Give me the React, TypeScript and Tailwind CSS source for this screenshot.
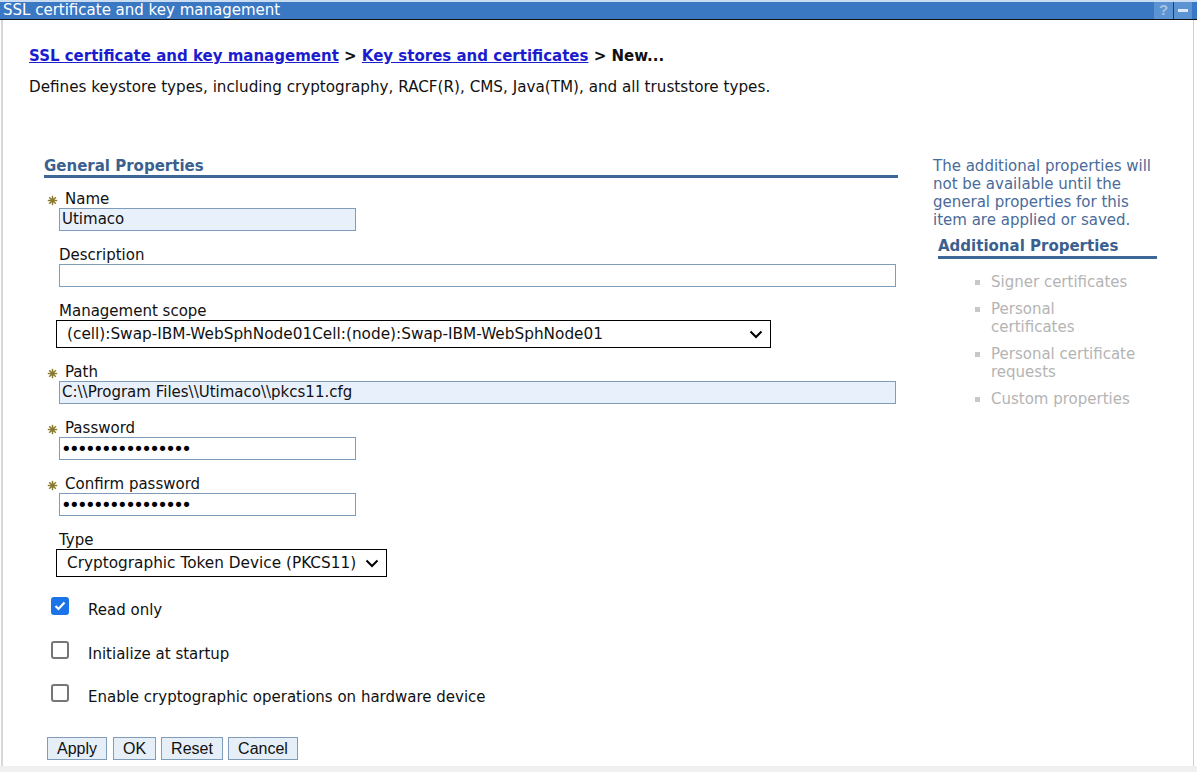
import React from "react";

const verdana = { fontFamily: '"DejaVu Sans", Verdana, sans-serif' };
const arial = { fontFamily: '"Liberation Sans", Arial, sans-serif' };

function Star() {
  // small olive "required" marker
  const rays = [0, 45, 90, 135];
  return (
    <svg width="11" height="11" viewBox="0 0 11 11" className="shrink-0">
      {rays.map((r) => (
        <line key={r} x1="5.5" y1="0.8" x2="5.5" y2="10.2" stroke="#8a7a2e" strokeWidth="1.4" transform={`rotate(${r} 5.5 5.5)`} />
      ))}
      <circle cx="5.5" cy="5.5" r="2.2" fill="#8a7a2e" />
    </svg>
  );
}

function Label({ text, required }: { text: string; required?: boolean }) {
  return (
    <div className="h-[18px] flex items-center text-[15px] leading-[18px] text-[#111]">
      {required ? (
        <>
          <span className="ml-[3px] mt-[2px]"><Star /></span>
          <span className="ml-[7px]">{text}</span>
        </>
      ) : (
        <span className="ml-[15px]">{text}</span>
      )}
    </div>
  );
}

function TextBox({ value, w, filled }: { value: string; w: string; filled?: boolean }) {
  return (
    <div
      className={`ml-[15px] h-[23px] border border-[#7f9db9] ${filled ? "bg-[#e8f0fc]" : "bg-white"} ${w} px-[2px] text-[15px] leading-[21px] text-[#111] whitespace-nowrap overflow-hidden`}
    >
      {value}
    </div>
  );
}

function Dots() {
  return (
    <div className="ml-[15px] h-[23px] w-[297px] border border-[#7f9db9] bg-white pl-[1px] flex items-center text-[18px] leading-[21px] tracking-[-2.6px] text-black whitespace-nowrap overflow-hidden">
      ••••••••••••••••
    </div>
  );
}

function Chevron() {
  return (
    <svg width="14" height="9" viewBox="0 0 14 9" className="shrink-0">
      <path d="M1.5 1.5 L7 7 L12.5 1.5" fill="none" stroke="#000" strokeWidth="2" />
    </svg>
  );
}

function Select({ value, w }: { value: string; w: string }) {
  return (
    <div className={`ml-[12px] h-[28px] border border-black bg-white ${w} flex items-center justify-between pl-[10px] pr-[7px] text-[15.3px] text-[#111]`}>
      <span className="whitespace-nowrap">{value}</span>
      <Chevron />
    </div>
  );
}

function Check({ checked, text }: { checked?: boolean; text: string }) {
  return (
    <div className="flex items-start h-[18px]">
      {checked ? (
        <span className="ml-[7px] w-[18px] h-[18px] shrink-0 rounded-[3px] bg-[#1a73e8] flex items-center justify-center">
          <svg width="12" height="10" viewBox="0 0 12 10">
            <path d="M1.5 5 L4.5 8 L10.5 1.5" fill="none" stroke="#fff" strokeWidth="2.2" />
          </svg>
        </span>
      ) : (
        <span className="ml-[7px] w-[18px] h-[18px] shrink-0 rounded-[3px] border-2 border-[#767676] bg-white" />
      )}
      <span className="ml-[19px] mt-[4px] text-[15px] leading-[18px] text-[#111] whitespace-nowrap">{text}</span>
    </div>
  );
}

function Btn({ text, w }: { text: string; w: string }) {
  return (
    <div className={`h-[23px] ${w} border border-[#7f9db9] bg-[#e6eef8] flex items-center justify-center text-[16px] text-[#111]`} style={arial}>
      {text}
    </div>
  );
}

export default function App() {
  return (
    <div className="w-[1197px] h-[772px] bg-white overflow-hidden flex flex-col" style={verdana}>
      {/* title bar */}
      <div className="h-[20px] shrink-0 bg-[#3a78c4] border-t-2 border-t-[#c9dcf2] border-b border-b-[#111] flex items-center justify-between">
        <span className="pl-[3px] text-[15px] leading-[17px] text-white whitespace-nowrap">SSL certificate and key management</span>
        <div className="flex h-full mr-[5px]">
          <div className="w-[19px] h-full bg-[#5b93d3] flex items-center justify-center text-[15px] font-bold text-[#a9c3e2]" style={arial}>?</div>
          <div className="w-[1px] h-full bg-[#1b3f6e]" />
          <div className="w-[18px] h-full bg-[#5b93d3] flex items-center justify-center">
            <div className="w-[10px] h-[3px] bg-[#dbe7f5]" />
          </div>
        </div>
      </div>

      <div className="flex-1 flex min-h-0">
        <div className="w-[2px] bg-[#d7d7d7] ml-[1px]" />
        <div className="flex-1 flex flex-col min-w-0">
          {/* breadcrumb */}
          <div className="pl-[26px] pt-[26px] text-[15px] font-bold leading-[20px] text-[#111] whitespace-nowrap">
            <a className="text-[#1c1ccf] underline">SSL certificate and key management</a>
            <span> &gt; </span>
            <a className="text-[#1c1ccf] underline">Key stores and certificates</a>
            <span> &gt; New...</span>
          </div>
          <div className="pl-[26px] pt-[12px] text-[15.2px] leading-[18px] text-[#111] whitespace-nowrap">
            Defines keystore types, including cryptography, RACF(R), CMS, Java(TM), and all truststore types.
          </div>

          <div className="flex pt-[61px]">
            {/* general properties */}
            <div className="ml-[41px] w-[854px] flex flex-col">
              <div className="h-[18px] text-[15px] font-bold text-[#3b5f8f] leading-[18px]">General Properties</div>
              <div className="h-[3px] bg-[#3d6797]" />

              <div className="mt-[12px]"><Label text="Name" required /></div>
              <TextBox value="Utimaco" w="w-[297px]" filled />

              <div className="mt-[15px]"><Label text="Description" /></div>
              <TextBox value="" w="w-[837px]" />

              <div className="mt-[15px]"><Label text="Management scope" /></div>
              <Select value="(cell):Swap-IBM-WebSphNode01Cell:(node):Swap-IBM-WebSphNode01" w="w-[715px]" />

              <div className="mt-[15px]"><Label text="Path" required /></div>
              <TextBox value="C:\\Program Files\\Utimaco\\pkcs11.cfg" w="w-[837px]" filled />

              <div className="mt-[15px]"><Label text="Password" required /></div>
              <Dots />

              <div className="mt-[15px]"><Label text="Confirm password" required /></div>
              <Dots />

              <div className="mt-[15px]"><Label text="Type" /></div>
              <Select value="Cryptographic Token Device (PKCS11)" w="w-[331px]" />

              <div className="mt-[20px]"><Check checked text="Read only" /></div>
              <div className="mt-[26px]"><Check text="Initialize at startup" /></div>
              <div className="mt-[25px]"><Check text="Enable cryptographic operations on hardware device" /></div>

              <div className="mt-[35px] ml-[3px] flex">
                <Btn text="Apply" w="w-[60px]" />
                <div className="w-[6px]" />
                <Btn text="OK" w="w-[43px]" />
                <div className="w-[5px]" />
                <Btn text="Reset" w="w-[62px]" />
                <div className="w-[5px]" />
                <Btn text="Cancel" w="w-[70px]" />
              </div>
            </div>

            {/* additional properties */}
            <div className="ml-[35px] w-[226px] flex flex-col">
              <div className="w-[225px] text-[15px] leading-[18px] text-[#4a6b9a]">
                The additional properties will not be available until the general properties for this item are applied or saved.
              </div>
              <div className="ml-[5px] mt-[8px] w-[219px] h-[18px] text-[15px] font-bold text-[#3b5f8f] leading-[18px] whitespace-nowrap">Additional Properties</div>
              <div className="ml-[5px] mt-[1px] w-[219px] h-[3px] bg-[#3d6797]" />
              <ul className="mt-[14px] ml-[42px] text-[15px] leading-[18px] text-[#b4b4b4] flex flex-col gap-[9px]">
                {["Signer certificates", "Personal certificates", "Personal certificate requests", "Custom properties"].map((t) => (
                  <li key={t} className="flex">
                    <span className="w-[16px] shrink-0 flex pt-[7px]"><span className="w-[5px] h-[5px] bg-[#c8c8c8]" /></span>
                    <span className="w-[148px]">{t}</span>
                  </li>
                ))}
              </ul>
            </div>
          </div>
        </div>
        <div className="w-[1px] bg-[#cfcfcf] mr-[3px]" />
      </div>
      <div className="h-[6px] shrink-0 bg-[#f0f0f0]" />
    </div>
  );
}
